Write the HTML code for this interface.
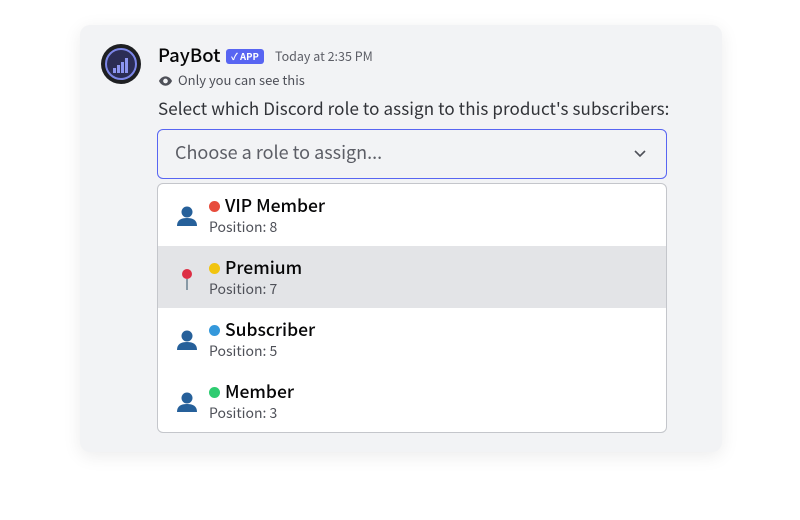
<!DOCTYPE html>
<html><head><style>
body{margin:0;width:800px;height:520px;background:#fff;font-family:"Noto Sans CJK JP","Liberation Sans",sans-serif;position:relative;overflow:hidden;line-height:1.2}
.card{position:absolute;left:80px;top:25px;width:642px;height:427px;background:#f2f3f5;border-radius:10px;box-shadow:0 4px 18px rgba(0,0,0,.08)}
.av{position:absolute;left:101px;top:44px;width:40px;height:40px;border-radius:50%;background:#1e1f22}
.name{position:absolute;left:158px;top:44px;font-size:18.5px;color:#060607;font-weight:500}
.app{position:absolute;left:226px;top:49px;background:#5865f2;color:#fff;font-size:9.5px;font-weight:bold;padding:1px 5px;border-radius:3px;line-height:13px}
.time{position:absolute;left:275px;top:48px;font-size:12.5px;color:#5c5e66}
.only{position:absolute;left:178px;top:72px;font-size:13px;color:#4e5058}
.q{position:absolute;left:158px;top:98px;font-size:17px;color:#313338;letter-spacing:.1px}
.sel{position:absolute;left:157px;top:129px;width:508px;height:48px;border:1px solid #5865f2;border-radius:6px;background:#f2f3f5}
.sel span{position:absolute;left:17px;top:12px;font-size:18px;color:#5c5e66}
.dd{position:absolute;left:157px;top:183px;width:508px;height:248px;border:1px solid #c4c6cb;border-radius:6px;background:#fff;overflow:hidden}
.row{position:absolute;left:0;width:508px;height:62px}
.row .t{position:absolute;left:67px;top:11px;font-size:17.5px;color:#060607;font-weight:500}
.row .p{position:absolute;left:51px;top:35px;font-size:14px;color:#4e5058}
.dot{position:absolute;left:51px;top:17px;width:11px;height:11px;border-radius:50%}
.ic{position:absolute;left:18px;top:21px}
</style></head><body>
<div class="card"></div>
<div class="av"><svg width="40" height="40"><circle cx="20" cy="20" r="15" fill="#2b2d55" stroke="#7c86e8" stroke-width="2"/><g fill="#8c95f0"><rect x="12" y="24" width="3" height="5"/><rect x="16" y="21" width="3" height="8"/><rect x="20" y="18" width="3" height="11"/><rect x="24" y="14" width="3" height="15"/></g></svg></div>
<div class="name">PayBot</div>
<div class="app">✓ APP</div>
<div class="time">Today at 2:35 PM</div>
<svg style="position:absolute;left:158px;top:75px" width="15" height="12" viewBox="0 0 16 12"><path d="M1 6C3 2 6 1 8 1s5 1 7 5c-2 4-5 5-7 5S3 10 1 6z" fill="#4e5058"/><circle cx="8" cy="6" r="2.5" fill="#f2f3f5"/></svg>
<div class="only">Only you can see this</div>
<div class="q">Select which Discord role to assign to this product's subscribers:</div>
<div class="sel"><span>Choose a role to assign...</span><svg style="position:absolute;left:476px;top:20px" width="12" height="8"><path d="M1 1l5 5 5-5" stroke="#4e5058" stroke-width="1.6" fill="none"/></svg></div>
<div class="dd">
<div class="row" style="top:0"><svg class="ic" width="22" height="22"><circle cx="11" cy="7" r="5.5" fill="#26609a"/><path d="M1 21c0-6 4-8 10-8s10 2 10 8z" fill="#26609a"/></svg><div class="dot" style="background:#e74c3c"></div><div class="t">VIP Member</div><div class="p">Position: 8</div></div>
<div class="row" style="top:62px;background:#e3e4e7"><svg class="ic" width="24" height="26"><circle cx="11" cy="7" r="5" fill="#dd2e44"/><rect x="10" y="12" width="2" height="11" fill="#8899a6"/></svg><div class="dot" style="background:#f1c40f"></div><div class="t">Premium</div><div class="p">Position: 7</div></div>
<div class="row" style="top:124px"><svg class="ic" width="22" height="22"><circle cx="11" cy="7" r="5.5" fill="#26609a"/><path d="M1 21c0-6 4-8 10-8s10 2 10 8z" fill="#26609a"/></svg><div class="dot" style="background:#3498db"></div><div class="t">Subscriber</div><div class="p">Position: 5</div></div>
<div class="row" style="top:186px"><svg class="ic" width="22" height="22"><circle cx="11" cy="7" r="5.5" fill="#26609a"/><path d="M1 21c0-6 4-8 10-8s10 2 10 8z" fill="#26609a"/></svg><div class="dot" style="background:#2ecc71"></div><div class="t">Member</div><div class="p">Position: 3</div></div>
</div>
</body></html>
